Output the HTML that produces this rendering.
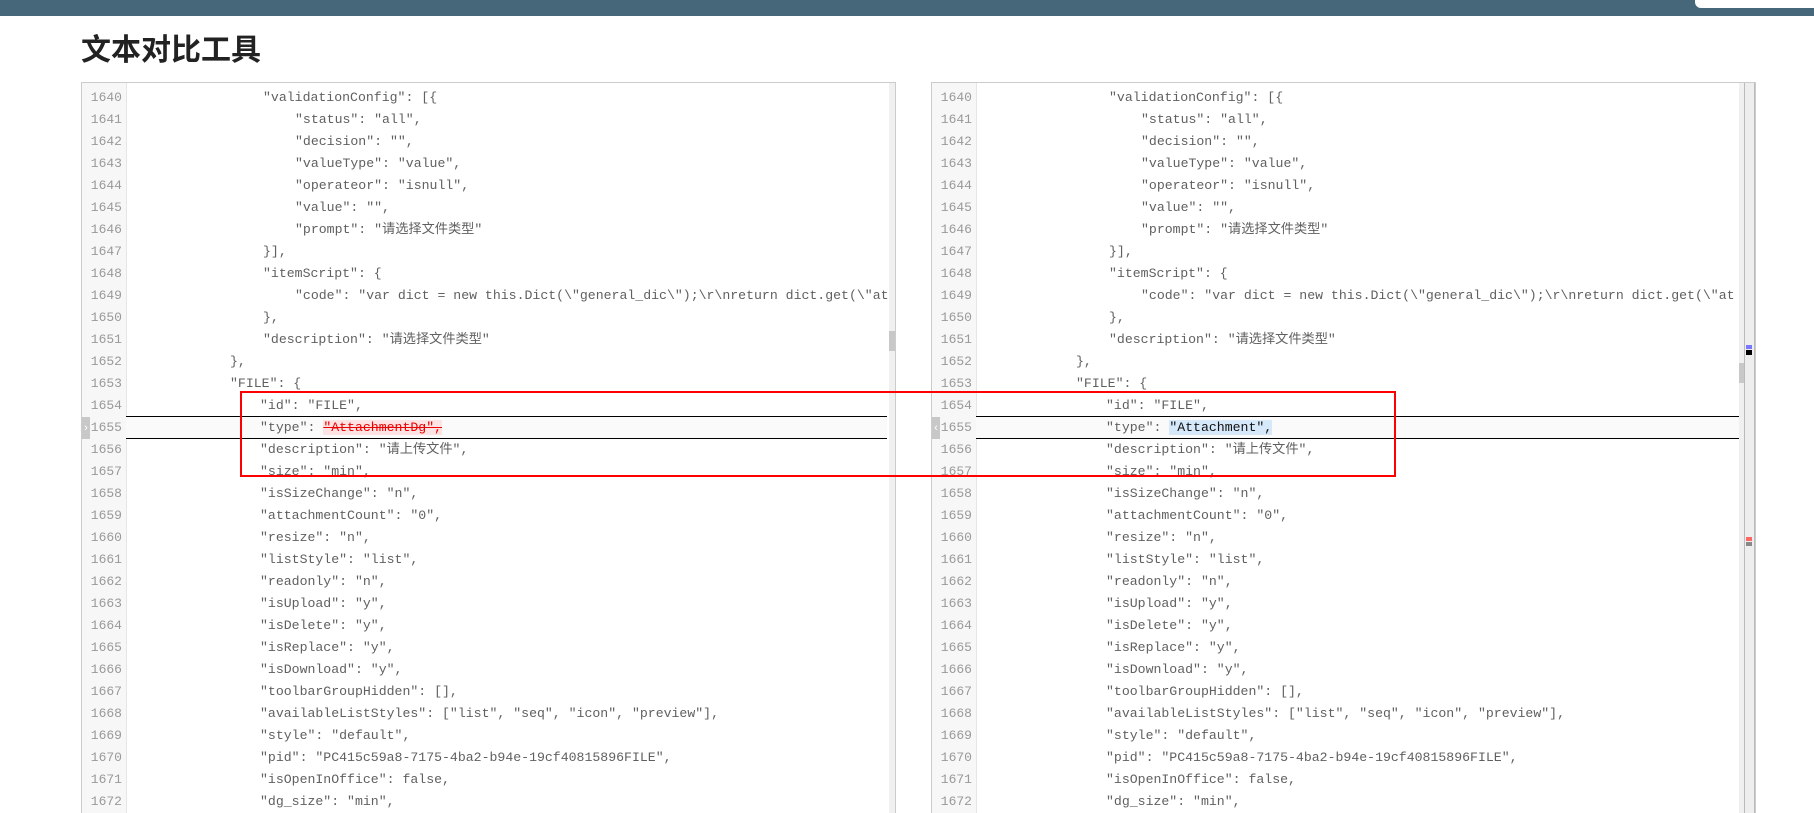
<!DOCTYPE html>
<html style="margin:0;height:813px;overflow:hidden"><head><meta charset="utf-8"><style>
body{margin:0;width:1814px;height:813px;overflow:hidden;background:#fff;position:relative;font-family:"Liberation Sans","Noto Sans CJK SC",sans-serif}
.top{position:absolute;left:0;top:0;width:1814px;height:16px;background:#46667a}
.tw{position:absolute;left:1695px;top:0;width:119px;height:8px;background:#fff;border-bottom-left-radius:6px}
h1{position:absolute;left:81px;top:33px;margin:0;font-size:30px;font-weight:bold;color:#222;line-height:36px}
.panel{position:absolute;top:82px;height:731px;border:1px solid #ccc;border-bottom:none;background:#fff;overflow:hidden}
.gut{position:absolute;left:0;top:0;width:44px;height:100%;background:#f7f7f7;border-right:1px solid #e6e6e6}
.row{position:absolute;left:0;right:8px;height:22px;font-family:"Liberation Mono","Noto Sans CJK SC",monospace;font-size:13.2px;line-height:22px;color:#606060;white-space:pre}
.ln{position:absolute;left:0;width:40px;text-align:right;color:#999;font-size:13px}
.c{position:absolute}
.hl{background:#fafafa;border-top:1px solid #000;border-bottom:1px solid #000;height:21px;line-height:21px;margin-top:-1px}
.sb{position:absolute;top:0;right:0;width:6px;height:100%;background:#f0f0f0}
.th{position:absolute;right:0;width:6px;background:#c8c8c8}
.mk{position:absolute;left:0;width:8px;height:22px;background:#c8c8c8;color:#fff;font-size:11px;line-height:22px;text-align:center}
</style></head><body>
<div class="top"></div><div class="tw"></div>
<h1>文本对比工具</h1>

<div class="panel" style="left:81px;width:813px">
<div class="gut"></div>
<div class="row" style="top:4px"><span class="ln">1640</span><span class="c" style="left:181px">"validationConfig": [{</span></div>
<div class="row" style="top:26px"><span class="ln">1641</span><span class="c" style="left:213px">"status": "all",</span></div>
<div class="row" style="top:48px"><span class="ln">1642</span><span class="c" style="left:213px">"decision": "",</span></div>
<div class="row" style="top:70px"><span class="ln">1643</span><span class="c" style="left:213px">"valueType": "value",</span></div>
<div class="row" style="top:92px"><span class="ln">1644</span><span class="c" style="left:213px">"operateor": "isnull",</span></div>
<div class="row" style="top:114px"><span class="ln">1645</span><span class="c" style="left:213px">"value": "",</span></div>
<div class="row" style="top:136px"><span class="ln">1646</span><span class="c" style="left:213px">"prompt": "请选择文件类型"</span></div>
<div class="row" style="top:158px"><span class="ln">1647</span><span class="c" style="left:181px">}],</span></div>
<div class="row" style="top:180px"><span class="ln">1648</span><span class="c" style="left:181px">"itemScript": {</span></div>
<div class="row" style="top:202px"><span class="ln">1649</span><span class="c" style="left:213px">"code": "var dict = new this.Dict(\"general_dic\");\r\nreturn dict.get(\"at</span></div>
<div class="row" style="top:224px"><span class="ln">1650</span><span class="c" style="left:181px">},</span></div>
<div class="row" style="top:246px"><span class="ln">1651</span><span class="c" style="left:181px">"description": "请选择文件类型"</span></div>
<div class="row" style="top:268px"><span class="ln">1652</span><span class="c" style="left:148px">},</span></div>
<div class="row" style="top:290px"><span class="ln">1653</span><span class="c" style="left:148px">"FILE": {</span></div>
<div class="row" style="top:312px"><span class="ln">1654</span><span class="c" style="left:178px">"id": "FILE",</span></div>
<div class="row hl" style="top:334px;left:44px"><span class="c" style="left:134px">"type": <span style="background:#fde3e3;color:#e00;text-decoration:line-through">"AttachmentDg",</span></span></div>
<div class="row" style="top:334px;width:44px;right:auto"><span class="ln">1655</span></div>
<div class="mk" style="top:334px">›</div>
<div class="row" style="top:356px"><span class="ln">1656</span><span class="c" style="left:178px">"description": "请上传文件",</span></div>
<div class="row" style="top:378px"><span class="ln">1657</span><span class="c" style="left:178px">"size": "min",</span></div>
<div class="row" style="top:400px"><span class="ln">1658</span><span class="c" style="left:178px">"isSizeChange": "n",</span></div>
<div class="row" style="top:422px"><span class="ln">1659</span><span class="c" style="left:178px">"attachmentCount": "0",</span></div>
<div class="row" style="top:444px"><span class="ln">1660</span><span class="c" style="left:178px">"resize": "n",</span></div>
<div class="row" style="top:466px"><span class="ln">1661</span><span class="c" style="left:178px">"listStyle": "list",</span></div>
<div class="row" style="top:488px"><span class="ln">1662</span><span class="c" style="left:178px">"readonly": "n",</span></div>
<div class="row" style="top:510px"><span class="ln">1663</span><span class="c" style="left:178px">"isUpload": "y",</span></div>
<div class="row" style="top:532px"><span class="ln">1664</span><span class="c" style="left:178px">"isDelete": "y",</span></div>
<div class="row" style="top:554px"><span class="ln">1665</span><span class="c" style="left:178px">"isReplace": "y",</span></div>
<div class="row" style="top:576px"><span class="ln">1666</span><span class="c" style="left:178px">"isDownload": "y",</span></div>
<div class="row" style="top:598px"><span class="ln">1667</span><span class="c" style="left:178px">"toolbarGroupHidden": [],</span></div>
<div class="row" style="top:620px"><span class="ln">1668</span><span class="c" style="left:178px">"availableListStyles": ["list", "seq", "icon", "preview"],</span></div>
<div class="row" style="top:642px"><span class="ln">1669</span><span class="c" style="left:178px">"style": "default",</span></div>
<div class="row" style="top:664px"><span class="ln">1670</span><span class="c" style="left:178px">"pid": "PC415c59a8-7175-4ba2-b94e-19cf40815896FILE",</span></div>
<div class="row" style="top:686px"><span class="ln">1671</span><span class="c" style="left:178px">"isOpenInOffice": false,</span></div>
<div class="row" style="top:708px"><span class="ln">1672</span><span class="c" style="left:178px">"dg_size": "min",</span></div>
<div class="sb"><div class="th" style="top:248px;height:20px"></div></div>
</div>

<div class="panel" style="left:931px;width:823px">
<div class="gut"></div>
<div class="row" style="top:4px;right:18px"><span class="ln">1640</span><span class="c" style="left:177px">"validationConfig": [{</span></div>
<div class="row" style="top:26px;right:18px"><span class="ln">1641</span><span class="c" style="left:209px">"status": "all",</span></div>
<div class="row" style="top:48px;right:18px"><span class="ln">1642</span><span class="c" style="left:209px">"decision": "",</span></div>
<div class="row" style="top:70px;right:18px"><span class="ln">1643</span><span class="c" style="left:209px">"valueType": "value",</span></div>
<div class="row" style="top:92px;right:18px"><span class="ln">1644</span><span class="c" style="left:209px">"operateor": "isnull",</span></div>
<div class="row" style="top:114px;right:18px"><span class="ln">1645</span><span class="c" style="left:209px">"value": "",</span></div>
<div class="row" style="top:136px;right:18px"><span class="ln">1646</span><span class="c" style="left:209px">"prompt": "请选择文件类型"</span></div>
<div class="row" style="top:158px;right:18px"><span class="ln">1647</span><span class="c" style="left:177px">}],</span></div>
<div class="row" style="top:180px;right:18px"><span class="ln">1648</span><span class="c" style="left:177px">"itemScript": {</span></div>
<div class="row" style="top:202px;right:18px;overflow:hidden"><span class="ln">1649</span><span class="c" style="left:209px">"code": "var dict = new this.Dict(\"general_dic\");\r\nreturn dict.get(\"at</span></div>
<div class="row" style="top:224px;right:18px"><span class="ln">1650</span><span class="c" style="left:177px">},</span></div>
<div class="row" style="top:246px;right:18px"><span class="ln">1651</span><span class="c" style="left:177px">"description": "请选择文件类型"</span></div>
<div class="row" style="top:268px;right:18px"><span class="ln">1652</span><span class="c" style="left:144px">},</span></div>
<div class="row" style="top:290px;right:18px"><span class="ln">1653</span><span class="c" style="left:144px">"FILE": {</span></div>
<div class="row" style="top:312px;right:18px"><span class="ln">1654</span><span class="c" style="left:174px">"id": "FILE",</span></div>
<div class="row hl" style="top:334px;left:44px;right:14px"><span class="c" style="left:130px">"type": <span style="background:#d6e9fb;color:#111">"Attachment",</span></span></div>
<div class="row" style="top:334px;width:44px;right:auto"><span class="ln">1655</span></div>
<div class="mk" style="top:334px">‹</div>
<div class="row" style="top:356px;right:18px"><span class="ln">1656</span><span class="c" style="left:174px">"description": "请上传文件",</span></div>
<div class="row" style="top:378px;right:18px"><span class="ln">1657</span><span class="c" style="left:174px">"size": "min",</span></div>
<div class="row" style="top:400px;right:18px"><span class="ln">1658</span><span class="c" style="left:174px">"isSizeChange": "n",</span></div>
<div class="row" style="top:422px;right:18px"><span class="ln">1659</span><span class="c" style="left:174px">"attachmentCount": "0",</span></div>
<div class="row" style="top:444px;right:18px"><span class="ln">1660</span><span class="c" style="left:174px">"resize": "n",</span></div>
<div class="row" style="top:466px;right:18px"><span class="ln">1661</span><span class="c" style="left:174px">"listStyle": "list",</span></div>
<div class="row" style="top:488px;right:18px"><span class="ln">1662</span><span class="c" style="left:174px">"readonly": "n",</span></div>
<div class="row" style="top:510px;right:18px"><span class="ln">1663</span><span class="c" style="left:174px">"isUpload": "y",</span></div>
<div class="row" style="top:532px;right:18px"><span class="ln">1664</span><span class="c" style="left:174px">"isDelete": "y",</span></div>
<div class="row" style="top:554px;right:18px"><span class="ln">1665</span><span class="c" style="left:174px">"isReplace": "y",</span></div>
<div class="row" style="top:576px;right:18px"><span class="ln">1666</span><span class="c" style="left:174px">"isDownload": "y",</span></div>
<div class="row" style="top:598px;right:18px"><span class="ln">1667</span><span class="c" style="left:174px">"toolbarGroupHidden": [],</span></div>
<div class="row" style="top:620px;right:18px"><span class="ln">1668</span><span class="c" style="left:174px">"availableListStyles": ["list", "seq", "icon", "preview"],</span></div>
<div class="row" style="top:642px;right:18px"><span class="ln">1669</span><span class="c" style="left:174px">"style": "default",</span></div>
<div class="row" style="top:664px;right:18px"><span class="ln">1670</span><span class="c" style="left:174px">"pid": "PC415c59a8-7175-4ba2-b94e-19cf40815896FILE",</span></div>
<div class="row" style="top:686px;right:18px"><span class="ln">1671</span><span class="c" style="left:174px">"isOpenInOffice": false,</span></div>
<div class="row" style="top:708px;right:18px"><span class="ln">1672</span><span class="c" style="left:174px">"dg_size": "min",</span></div>
<div style="position:absolute;right:10px;top:0;width:6px;height:100%;background:#f0f0f0"><div class="th" style="top:280px;height:20px"></div></div>
<div style="position:absolute;right:0;top:0;width:9px;height:100%;background:#eee;border-left:1px solid #bbb;border-right:1px solid #bbb">
<div style="position:absolute;left:1px;top:262px;width:6px;height:4px;background:#77f"></div>
<div style="position:absolute;left:1px;top:267px;width:6px;height:5px;background:#000"></div>
<div style="position:absolute;left:1px;top:454px;width:6px;height:4px;background:#f66"></div>
<div style="position:absolute;left:1px;top:459px;width:6px;height:4px;background:#888"></div>
</div>
</div>

<div style="position:absolute;left:240px;top:391px;width:1152px;height:82px;border:2px solid #f00"></div>
</body></html>
